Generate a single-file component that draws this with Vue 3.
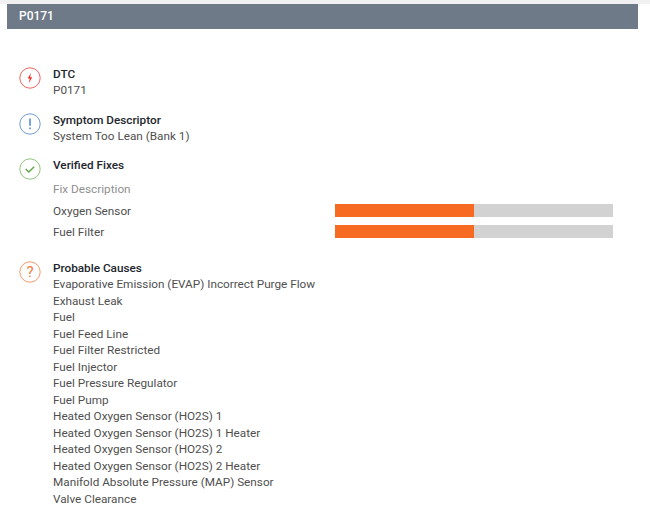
<template>
  <div class="page">
    <div class="topline"></div>
    <header class="title">P0171</header>
    <main class="content">
      <section class="row dtc">
        <svg class="icon" viewBox="0 0 22 22"><circle cx="11" cy="11" r="10.2" fill="none" stroke="#f0665f" stroke-width="1"/><path d="M11.8 6 8.7 11.6h2l-.8 4.6 3.3-6h-2z" fill="#ee3124"/></svg>
        <div class="body">
          <h3>DTC</h3>
          <p>P0171</p>
        </div>
      </section>
      <section class="row symptom">
        <svg class="icon" viewBox="0 0 22 22"><circle cx="11" cy="11" r="10.2" fill="none" stroke="#6f9bd6" stroke-width="1"/><path d="M11 5.6v7.2" stroke="#3b7cc9" stroke-width="1.4" fill="none"/><path d="M11 14.6v1.7" stroke="#3b7cc9" stroke-width="1.4" fill="none"/></svg>
        <div class="body">
          <h3>Symptom Descriptor</h3>
          <p>System Too Lean (Bank 1)</p>
        </div>
      </section>
      <section class="row fixes">
        <svg class="icon" viewBox="0 0 22 22"><circle cx="11" cy="11" r="10.2" fill="none" stroke="#93c47d" stroke-width="1"/><path d="M6.8 11l3 3 5.4-5.2" stroke="#62a744" stroke-width="1.5" fill="none"/></svg>
        <div class="body">
          <h3>Verified Fixes</h3>
          <div class="fix-head">Fix Description</div>
          <div v-for="fix in fixes" :key="fix" class="fix">
            <span class="fix-name">{{ fix }}</span>
            <div class="bar"><div class="fill"></div></div>
          </div>
        </div>
      </section>
      <section class="row causes">
        <svg class="icon" viewBox="0 0 22 22"><circle cx="11" cy="11" r="10.2" fill="none" stroke="#f79a70" stroke-width="1"/><text x="11" y="16" text-anchor="middle" class="q">?</text></svg>
        <div class="body">
          <h3>Probable Causes</h3>
          <ul>
            <li v-for="c in causes" :key="c">{{ c }}</li>
          </ul>
        </div>
      </section>
    </main>
  </div>
</template>

<script setup>
const fixes = ['Oxygen Sensor', 'Fuel Filter']
const causes = [
  'Evaporative Emission (EVAP) Incorrect Purge Flow',
  'Exhaust Leak',
  'Fuel',
  'Fuel Feed Line',
  'Fuel Filter Restricted',
  'Fuel Injector',
  'Fuel Pressure Regulator',
  'Fuel Pump',
  'Heated Oxygen Sensor (HO2S) 1',
  'Heated Oxygen Sensor (HO2S) 1 Heater',
  'Heated Oxygen Sensor (HO2S) 2',
  'Heated Oxygen Sensor (HO2S) 2 Heater',
  'Manifold Absolute Pressure (MAP) Sensor',
  'Valve Clearance'
]
</script>

<style>
html, body { margin: 0; background: #fff; overflow: hidden; }
</style>

<style scoped>
.page {
  width: 650px;
  height: 512px;
  overflow: hidden;
  font-family: Roboto, "Liberation Sans", sans-serif;
  font-size: 11.75px;
  color: #4f4f4f;
}
.topline { height: 4px; background: #f1f1f1; }
.title {
  margin: 0 12px 0 6.5px;
  height: 25px;
  line-height: 25px;
  padding-left: 12.5px;
  background: #6f7a89;
  color: #fff;
  font-size: 12px;
  font-weight: 500;
}
.content { padding: 37px 37px 0 19px; }
.row { display: flex; gap: 12px; }
.icon { width: 22px; height: 22px; flex: none; margin-top: 1px; }
.body { flex: 1; }
h3 { margin: 0; font-size: 11.75px; line-height: 16px; font-weight: 500; color: #22262c; }
p { margin: 0; line-height: 16.5px; }
.symptom { margin-top: 13px; }
.fixes { margin-top: 12.5px; }
.fix-head { margin-top: 8px; line-height: 16px; color: #8f8f8f; }
.fix { display: flex; align-items: center; height: 21px; }
.fix-head + .fix { margin-top: 3.5px; }
.fix-name { width: 282px; }
.bar { width: 278px; height: 13px; background: #d2d2d2; }
.fill { width: 50%; height: 100%; background: #f66a22; }
.causes { margin-top: 18px; }
ul { margin: 0; padding: 0; list-style: none; }
li { line-height: 16.5px; }
.q { font-size: 15px; font-family: Roboto, sans-serif; fill: #f47a3c; }
</style>
